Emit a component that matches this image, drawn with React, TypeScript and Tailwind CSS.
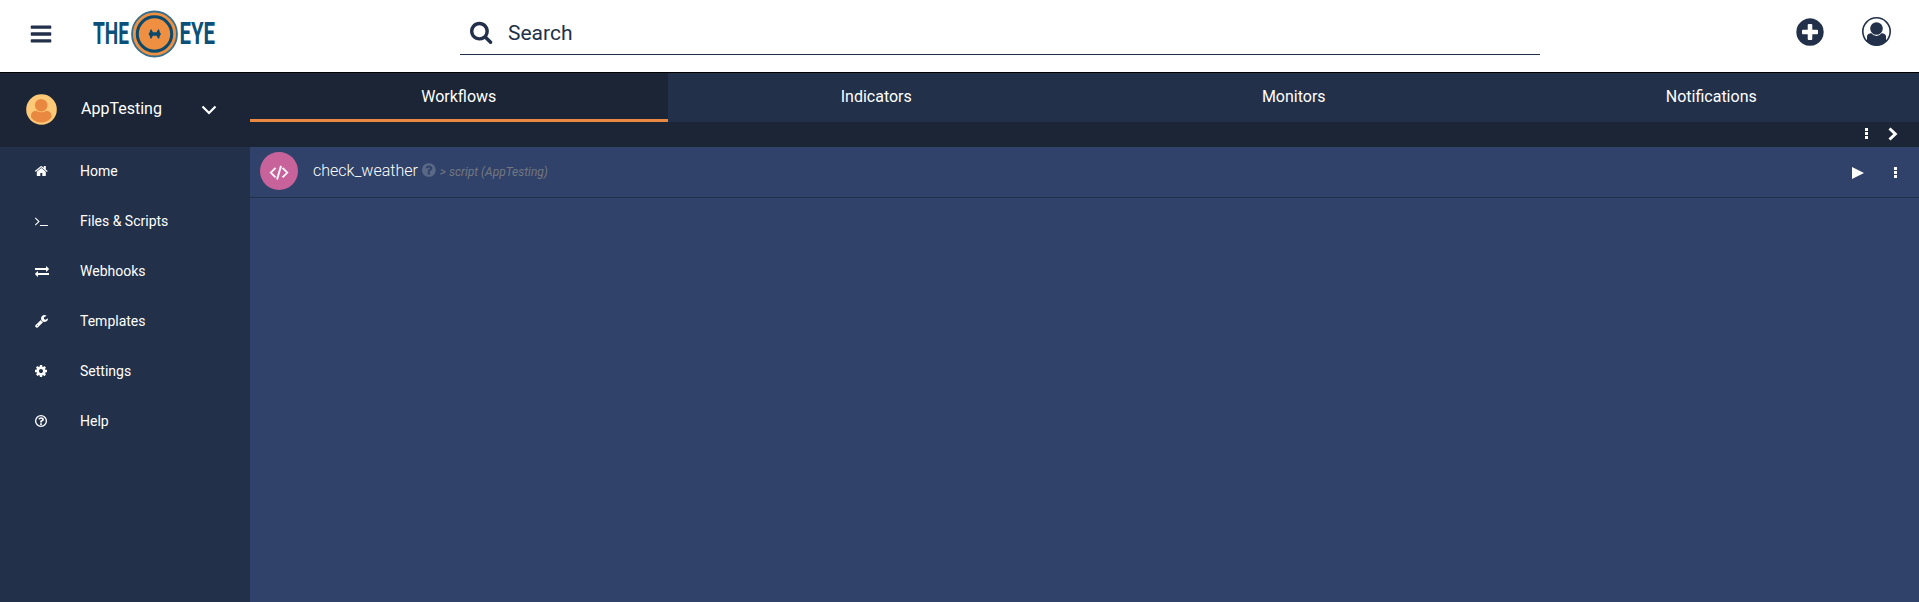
import React from "react";

const RING =
  "M1664 896q0 209-103 385.5t-279.5 279.5-385.5 103-385.5-103-279.5-279.5-103-385.5 103-385.5 279.5-279.5 385.5-103 385.5 103 279.5 279.5 103 385.5z";

const ICONS = {
  bars: "M1664 1344v128q0 26-19 45t-45 19h-1408q-26 0-45-19t-19-45v-128q0-26 19-45t45-19h1408q26 0 45 19t19 45zm0-512v128q0 26-19 45t-45 19h-1408q-26 0-45-19t-19-45v-128q0-26 19-45t45-19h1408q26 0 45 19t19 45zm0-512v128q0 26-19 45t-45 19h-1408q-26 0-45-19t-19-45v-128q0-26 19-45t45-19h1408q26 0 45 19t19 45z",
  home: "M1472 992v480q0 26-19 45t-45 19h-384v-384h-256v384h-384q-26 0-45-19t-19-45v-480q0-1 .5-3t.5-3l575-474 575 474q1 2 1 6zm223-69l-62 74q-8 9-21 11h-3q-13 0-21-7l-692-577-692 577q-12 8-24 7-13-2-21-11l-62-74q-8-10-7-23.5t11-21.5l719-599q32-26 76-26t76 26l244 204v-195q0-14 9-23t23-9h192q14 0 23 9t9 23v408l219 182q10 8 11 21.5t-7 23.5z",
  terminal:
    "M649 983l-466 466q-10 10-23 10t-23-10l-50-50q-10-10-10-23t10-23l393-393-393-393q-10-10-10-23t10-23l50-50q10-10 23-10t23 10l466 466q10 10 10 23t-10 23zm1079 457v64q0 14-9 23t-23 9h-960q-14 0-23-9t-9-23v-64q0-14 9-23t23-9h960q14 0 23 9t9 23z",
  exchange:
    "M1792 1184v192q0 13-9.5 22.5t-22.5 9.5h-1376v192q0 13-9.5 22.5t-22.5 9.5q-12 0-24-10l-319-320q-9-9-9-22 0-14 9-23l320-320q9-9 23-9 13 0 22.5 9.5t9.5 22.5v192h1376q13 0 22.5 9.5t9.5 22.5zm0-544q0 14-9 23l-320 320q-9 9-23 9-13 0-22.5-9.5t-9.5-22.5v-192h-1376q-13 0-22.5-9.5t-9.5-22.5v-192q0-13 9.5-22.5t22.5-9.5h1376v-192q0-14 9-23t23-9q12 0 24 10l319 319q9 9 9 23z",
  wrench:
    "M448 1472q0-26-19-45t-45-19-45 19-19 45 19 45 45 19 45-19 19-45zm644-420l-682 682q-37 37-90 37-52 0-91-37l-106-108q-38-36-38-90 0-53 38-91l681-681q39 98 114.5 173.5t173.5 114.5zm634-435q0 39-23 106-47 134-164.5 217.5t-258.5 83.5q-185 0-316.5-131.5t-131.5-316.5 131.5-316.5 316.5-131.5q58 0 121.5 16.5t107.5 46.5q16 11 16 28t-16 28l-293 169v224l193 107q5-3 79-48.5t135.5-81 70.5-35.5q15 0 23.5 10t8.5 25z",
  cog: "M1152 896q0-106-75-181t-181-75-181 75-75 181 75 181 181 75 181-75 75-181zm512-109v222q0 12-8 23t-20 13l-185 28q-19 54-39 91 35 50 107 138 10 12 10 25t-9 23q-27 37-99 108t-94 71q-12 0-26-9l-138-108q-44 23-91 38-16 136-29 186-7 28-36 28h-222q-14 0-24.5-8.5t-11.5-21.5l-28-184q-49-16-90-37l-141 107q-10 9-25 9-14 0-25-11-126-114-165-168-7-10-7-23 0-12 8-23 15-21 51-66.5t54-70.5q-27-50-41-99l-183-27q-13-2-21-12.5t-8-23.5v-222q0-12 8-23t19-13l186-28q14-46 39-92-40-57-107-138-10-12-10-24 0-10 9-23 26-36 98.5-107.5t94.5-71.5q13 0 26 10l138 107q44-23 91-38 16-136 29-186 7-28 36-28h222q14 0 24.5 8.5t11.5 21.5l28 184q49 16 90 37l142-107q9-9 24-9 13 0 25 10 129 119 165 170 7 8 7 22 0 12-8 23-15 21-51 66.5t-54 70.5q26 50 41 98l183 28q13 2 21 12.5t8 23.5z",
  help: "M1008 1200v160q0 14-9 23t-23 9h-160q-14 0-23-9t-9-23v-160q0-14 9-23t23-9h160q14 0 23 9t9 23zm256-496q0 50-15 90t-45.5 69-52 44-59.5 36q-32 18-46.5 28t-26 24-11.5 29v32q0 14-9 23t-23 9h-160q-14 0-23-9t-9-23v-68q0-35 10.5-64.5t24-47.5 39-35.5 41-25.5 44.5-21q53-25 75-43t22-49q0-42-43.5-71.5t-95.5-29.5q-56 0-95 27-29 20-80 83-9 12-25 12-11 0-19-6l-108-82q-10-7-12-20t5-23q122-192 349-192 129 0 238.5 89.5t109.5 214.5z",
  question:
    "M1024 1376v-192q0-14-9-23t-23-9h-192q-14 0-23 9t-9 23v192q0 14 9 23t23 9h192q14 0 23-9t9-23zm256-672q0-88-55.5-163t-138.5-116-170-41q-243 0-371 213-15 24 8 42l132 100q7 6 19 6 16 0 25-12 53-68 86-92 34-24 86-24 48 0 85.5 26t37.5 59q0 38-20 61t-68 45q-63 28-115.5 86.5t-52.5 125.5v36q0 14 9 23t23 9h192q14 0 23-9t9-23q0-19 21.5-49.5t54.5-49.5q32-18 49-28.5t46-35 44.5-48 28-60.5 12.5-81z" +
    RING,
  search:
    "M1216 832q0-185-131.5-316.5t-316.5-131.5-316.5 131.5-131.5 316.5 131.5 316.5 316.5 131.5 316.5-131.5 131.5-316.5zm512 832q0 52-38 90t-90 38q-54 0-90-38l-343-342q-179 124-399 124-143 0-273.5-55.5t-225-150-150-225-55.5-273.5 55.5-273.5 150-225 225-150 273.5-55.5 273.5 55.5 225 150 150 225 55.5 273.5q0 220-124 399l343 343q37 37 37 90z",
  plus:
    "M1344 960v-128q0-26-19-45t-45-19h-256v-256q0-26-19-45t-45-19h-128q-26 0-45 19t-19 45v256h-256q-26 0-45 19t-19 45v128q0 26 19 45t45 19h256v256q0 26 19 45t45 19h128q26 0 45-19t19-45v-256h256q26 0 45-19t19-45z" +
    RING,
  code: "M681 1399l-50 50q-10 10-23 10t-23-10l-466-466q-10-10-10-23t10-23l466-466q10-10 23-10t23 10l50 50q10 10 10 23t-10 23l-393 393 393 393q10 10 10 23t-10 23zm591-1067l-373 1291q-4 13-15.5 19.5t-23.5 2.5l-62-17q-13-4-19.5-15.5t-2.5-24.5l373-1291q4-13 15.5-19.5t23.5-2.5l62 17q13 4 19.5 15.5t2.5 24.5zm657 651l-466 466q-10 10-23 10t-23-10l-50-50q-10-10-10-23t10-23l393-393-393-393q-10-10-10-23t10-23l50-50q10-10 23-10t23 10l466 466q10 10 10 23t-10 23z",
};

type IconName = keyof typeof ICONS;

function Icon({ name, left = 0, className }: { name: IconName; left?: number; className: string }) {
  return (
    <svg viewBox={`${left} 0 1792 1792`} className={`shrink-0 overflow-visible ${className}`} fill="currentColor" fillRule="evenodd" aria-hidden>
      <path d={ICONS[name]} />
      {name === "help" && <circle cx="896" cy="896" r="690" fill="none" stroke="currentColor" strokeWidth="170" />}
    </svg>
  );
}

function Logo() {
  return (
    <svg viewBox="0 0 128 50" className="ml-[40px] h-[50px] w-[128px] shrink-0 overflow-visible" aria-label="The Eye">
      <g fill="#0b5078" fontFamily="Roboto, sans-serif" fontWeight="700" fontSize="30.500">
        <text x="0" y="34" textLength="36" lengthAdjust="spacingAndGlyphs">THE</text>
        <text x="86.500" y="34" textLength="35.500" lengthAdjust="spacingAndGlyphs">EYE</text>
      </g>
      <circle cx="61.500" cy="24" r="22.500" fill="#ee8f41" stroke="#376f8c" strokeWidth="1.800" />
      <circle cx="61.500" cy="24" r="17.200" fill="#ee8f41" stroke="#0b4a6c" strokeWidth="3" />
      <path d="M58 19l2 3.300h3.500l2-3.300q1.200 1 1.200 3l1.300 2-1.300 2q0 2-1.200 3l-2-3.300H60L58 29q-1.200-1-1.200-3l-1.300-2 1.300-2q0-2 1.200-3z" fill="#0b4a6c" />
    </svg>
  );
}

function Dots() {
  return (
    <span className="flex w-1 flex-col gap-px">
      <i className="h-[3px] w-[3px] bg-white" />
      <i className="h-[3px] w-[3px] bg-white" />
      <i className="h-[3px] w-[3px] bg-white" />
    </span>
  );
}

const NAV: { label: string; icon: IconName; left: number }[] = [
  { label: "Home", icon: "home", left: 89 },
  { label: "Files & Scripts", icon: "terminal", left: 77 },
  { label: "Webhooks", icon: "exchange", left: 0 },
  { label: "Templates", icon: "wrench", left: 64 },
  { label: "Settings", icon: "cog", left: 128 },
  { label: "Help", icon: "help", left: 128 },
];

const TABS = ["Workflows", "Indicators", "Monitors", "Notifications"];

export default function App() {
  return (
    <div className="flex h-[602px] w-full flex-col overflow-hidden bg-[#304269] font-[Roboto,sans-serif] text-white">
      <header className="flex h-[73px] shrink-0 border-b border-black bg-white text-[#22304a]">
        <div className="flex w-[460px] shrink-0 pl-[29px] pt-[10px]">
          <Icon name="bars" className="mt-[11.5px] h-6 w-6" />
          <Logo />
        </div>
        <div className="flex h-[55px] w-[1080px] shrink-0 border-b border-[#22304a] pl-[10px]">
          <Icon name="search" left={64} className="mt-[19.5px] h-6 w-6" />
          <span className="ml-[14px] mt-[18px] text-[21px] leading-[30px]">Search</span>
        </div>
        <div className="flex flex-1 pl-[254px] pt-[16px]">
          <Icon name="plus" className="h-8 w-8" />
          <svg viewBox="0 0 29 29" className="ml-[36px] mt-px h-[29px] w-[29px]" aria-hidden>
            <circle cx="14.500" cy="14.500" r="13.700" fill="none" stroke="#22304a" strokeWidth="1.600" />
            <circle cx="14.500" cy="11.500" r="6.300" fill="#22304a" />
            <path d="M5 24V19q.5-2.500 4.500-2.800 2 2.800 5 2.800t5-2.800q4 .3 4.500 2.800v5q-4 4.500-9.500 4.500T5 24z" fill="#22304a" />
          </svg>
        </div>
      </header>
      <div className="flex min-h-0 flex-1">
        <aside className="w-[250px] shrink-0 bg-[#22304a]">
          <div className="flex h-[74px] bg-[#1b2536]">
            <svg viewBox="0 0 31 31" className="ml-[26px] mt-[21px] h-[31px] w-[31px] shrink-0" aria-hidden>
              <circle cx="15.500" cy="15.500" r="15.300" fill="#ffc977" />
              <circle cx="15.200" cy="11.200" r="6.300" fill="#e98840" />
              <path d="M5 22q0-5 5-5.200 5.200 3 10.400 0 5 .2 5 5.200v1.500q-4 5-10.200 5T5 23.500z" fill="#e98840" />
            </svg>
            <span className="ml-[24px] mt-[24px] w-[116px] text-[16px] leading-6">AppTesting</span>
            <svg viewBox="0 0 16 16" className="ml-1 mt-[29px] h-4 w-4" fill="none" stroke="white" strokeWidth="2.200" aria-hidden>
              <path d="M1.500 4.500l6.500 6.500 6.500-6.500" />
            </svg>
          </div>
          <nav>
            {NAV.map((n) => (
              <div key={n.label} className="flex h-[50px] items-center pb-[2px] pl-[35px]">
                <Icon name={n.icon} left={n.left} className="h-[14px] w-[14px]" />
                <span className="ml-[31px] text-[14px] leading-5">{n.label}</span>
              </div>
            ))}
          </nav>
        </aside>
        <main className="flex min-w-0 flex-1 flex-col overflow-hidden">
          <div className="grid h-[49px] w-[1670px] shrink-0 grid-cols-4">
            {TABS.map((t, i) => (
              <div
                key={t}
                className={
                  i === 0
                    ? "border-b-3 border-[#e98840] bg-[#1b2536] pt-[12px] text-center text-[16px] leading-6"
                    : "bg-[#22304a] pt-[12px] text-center text-[16px] leading-6"
                }
              >
                {t}
              </div>
            ))}
          </div>
          <div className="flex h-[25px] shrink-0 items-start justify-end bg-[#1b2536] pr-[21px] pt-[5px]">
            <span className="mr-[19px] mt-px">
              <Dots />
            </span>
            <svg viewBox="0 0 10 14" className="h-[14px] w-[10px]" fill="none" stroke="white" strokeWidth="3" aria-hidden>
              <path d="M1.500 1.500L7.300 7 1.500 12.500" />
            </svg>
          </div>
          <div className="flex h-[51px] shrink-0 items-start border-b border-[#22304a] pl-[10px]">
            <span className="mt-[5px] flex h-[38px] w-[38px] items-center justify-center rounded-full bg-[#c7629b]">
              <svg viewBox="109 0 1820 1792" className="mt-[2px] h-[18px] w-[18px] overflow-visible" fill="white" stroke="white" strokeWidth="60" aria-hidden>
                <path d={ICONS.code} />
              </svg>
            </span>
            <span className="ml-[15px] mt-[12px] text-[16px] font-light leading-6">check_weather</span>
            <Icon name="question" left={128} className="ml-[4px] mt-[15px] h-4 w-4 text-[#596886]" />
            <span className="ml-[2px] mt-[15px] text-[12px] italic leading-5 text-[#737780]">&gt; script (AppTesting)</span>
            <span className="flex-1" />
            <svg viewBox="0 0 12 12" className="mr-[30px] mt-[20px] h-3 w-3" fill="white" aria-hidden>
              <path d="M0 0l12 6-12 6z" />
            </svg>
            <span className="mr-[21px] mt-[20px]">
              <Dots />
            </span>
          </div>
        </main>
      </div>
    </div>
  );
}
